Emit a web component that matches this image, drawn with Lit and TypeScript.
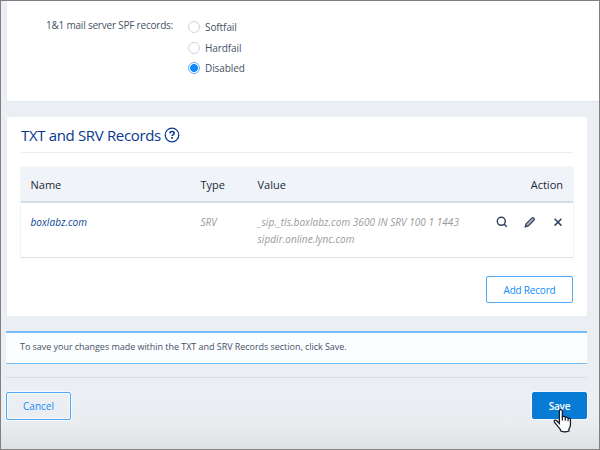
import { LitElement, html, css, svg } from "lit";
import { customElement } from "lit/decorators.js";

const icons = {
  search: svg`<circle cx="5.300" cy="5.300" r="4"/><path d="M8.200 8.200l2.600 2.600"/>`,
  edit: svg`<path d="M1.200 10.800l.9-3.100L8 1.900q.7-.7 1.500 0l.6.6q.7.8 0 1.500L4.300 9.900z" fill="#a9b3c3" stroke-width="1.200"/><path d="M.9 11.100l1-2.600 1.600 1.600z" fill="#33435f" stroke="none"/>`,
  remove: svg`<path d="M2.600 2.800l6.800 6.800M9.400 2.800l-6.800 6.800"/>`,
};

@customElement("app-root")
export class AppRoot extends LitElement {
  static styles = css`
    :host {
      display: block;
      box-sizing: border-box;
      width: 600px;
      height: 450px;
      overflow: hidden;
      border: 1px solid #808080;
      background: linear-gradient(#ebeff4 0, #ebeff4 398px, #e9ecef 425px, #dfe2e5 448px);
      font-family: "Open Sans", "Noto Sans", sans-serif;
      font-size: 10px;
      color: #465266;
    }
    * { box-sizing: border-box; }
    .spf {
      margin-left: 6px;
      height: 100px;
      padding: 17px 0 0 39px;
      display: flex;
      background: #fff;
      border-radius: 0 0 0 2px;
      box-shadow: 0 1px 1px #e2e6eb;
    }
    .label { width: 142px; line-height: 14px; letter-spacing: -0.210px; white-space: nowrap; }
    .options { display: flex; flex-direction: column; }
    .option { display: flex; align-items: center; height: 20.500px; margin-top: -1px; gap: 5px; margin-bottom: 1px; line-height: 14px; letter-spacing: -0.080px; }
    .radio { width: 12px; height: 12px; border: 1px solid #cbd4e1; border-radius: 50%; }
    .radio.on { border-color: #5eaffa; background: radial-gradient(circle, #118bf8 3.600px, #fff 4.300px); }
    .card {
      margin: 16px 0 0 6px;
      width: 580px;
      height: 199px;
      padding: 0 14px;
      background: #fff;
      border-radius: 2px;
      box-shadow: 0 0 1px #dce2e9;
    }
    .title {
      display: flex;
      align-items: center;
      gap: 3.500px;
      height: 36px;
      border-bottom: 1px solid #e9eef4;
      color: #06388f;
      font-size: 15px;
      letter-spacing: -0.340px;
      white-space: nowrap;
    }
    .help { width: 16px; height: 16px; }
    .table { margin-top: 14px; width: 552px; height: 90px; box-shadow: 0 0 1px #d5dbe2, 0 1px 1px #e3e6e9; }
    .row { display: grid; grid-template-columns: 170px 57px 1fr 86px; padding: 0 10px 0 9.500px; }
    .head { height: 36px; align-items: center; background: #f0f3f7; border-bottom: 2px solid #d5dee8; color: #222b38; font-size: 11px; }
    .head span:last-child { text-align: right; }
    .body { padding: 10.500px 9px 0 9.500px; font-style: italic; color: #9a9a9a; line-height: 17.200px; white-space: nowrap; letter-spacing: 0.050px; }
    .name { color: #0b4592; font-weight: 500; }
    .actions { display: flex; gap: 16px; justify-content: flex-end; padding-top: 2.500px; }
    .icon { width: 12px; height: 12px; fill: none; stroke: #33435f; stroke-width: 1.500; }
    .add { display: flex; justify-content: flex-end; margin-top: 19px; }
    .button {
      height: 27px;
      padding: 0;
      border: 1px solid #51a8f5;
      border-radius: 2px;
      background: transparent;
      color: #118bf8;
      font: 500 10px/14px "Open Sans", "Noto Sans", sans-serif;
      letter-spacing: -0.200px;
    }
    .add .button { width: 87px; background: #fff; }
    .notice {
      margin: 15px 0 0 5px;
      width: 581px;
      height: 33px;
      border: solid #76befa;
      border-width: 2px 0 1px;
      background: #fcfdff;
      padding-left: 14px;
      font-size: 9px;
      letter-spacing: -0.040px;
      line-height: 28px;
      white-space: nowrap;
    }
    .rule { height: 1px; width: 581px; margin: 13px 0 0 5px; background: #d9dde2; }
    .footer { width: 581px; margin: 14px 0 0 5px; display: flex; justify-content: space-between; position: relative; }
    .cancel { width: 65px; height: 28px; letter-spacing: 0; box-shadow: 0 0 1px 1px #f8fafc, inset 0 0 1px 1px #f8fafc; }
    .save { width: 55px; height: 27px; border-color: #087cd5; background: #087cd5; color: #fff; font-weight: 600; box-shadow: 0 0 1px 1px #f6f9fb; }
    .cursor { position: absolute; left: 545px; top: 15px; width: 21.500px; height: 27px; }
  `;

  render() {
    return html`
      <section class="spf">
        <div class="label">1&amp;1 mail server SPF records:</div>
        <div class="options">
          ${["Softfail", "Hardfail", "Disabled"].map(
            (name) => html`<div class="option"><i class="radio ${name === "Disabled" ? "on" : ""}"></i><span>${name}</span></div>`
          )}
        </div>
      </section>
      <section class="card">
        <div class="title">
          <span>TXT and SRV Records</span>
          <svg class="help" viewBox="0 0 16 16" fill="none" stroke="#06388f">
            <circle cx="8" cy="8" r="6.800" stroke-width="1.200"/>
            <path d="M5.900 6.400c.1-2.600 4.300-2.500 4.300-.1 0 1.300-2.100 1.300-2.100 2.800" stroke-width="1.500"/>
            <path d="M8.100 10.100v1.700" stroke-width="1.700"/>
          </svg>
        </div>
        <div class="table">
          <div class="row head"><span>Name</span><span>Type</span><span>Value</span><span>Action</span></div>
          <div class="row body">
            <span class="name">boxlabz.com</span>
            <span>SRV</span>
            <span class="value">_sip._tls.boxlabz.com 3600 IN SRV 100 1 1443<br>sipdir.online.lync.com</span>
            <span class="actions">
              ${[icons.search, icons.edit, icons.remove].map(
                (icon) => html`<svg class="icon" viewBox="0 0 12 12">${icon}</svg>`
              )}
            </span>
          </div>
        </div>
        <div class="add"><button class="button">Add Record</button></div>
      </section>
      <div class="notice">To save your changes made within the TXT and SRV Records section, click Save.</div>
      <div class="rule"></div>
      <div class="footer">
        <button class="button cancel">Cancel</button>
        <button class="button save">Save</button>
        <svg class="cursor" viewBox="0 0 20 26" preserveAspectRatio="none">
          <path d="M7.800 15.800V4.200q0-1.700 1.400-1.700t1.400 1.700v5.200q2-.9 2.700.7 1.900-.8 2.600.8 2.200-.5 2.200 1.700v4.300q0 2.500-1.400 4.100v2.100q-3.800 1.700-7.600 0c-.2-2.300-2.200-3.400-3.400-5.500L3.100 14.600c-.7-1.700 1-2.500 2.200-1.300z" fill="#fff" stroke="#151b2a" stroke-width="1.200"/>
          <path d="M10.600 9v4M13.300 10v3.300M15.900 11v2.800" fill="none" stroke="#151b2a" stroke-width="1.100"/>
        </svg>
      </div>
    `;
  }
}
